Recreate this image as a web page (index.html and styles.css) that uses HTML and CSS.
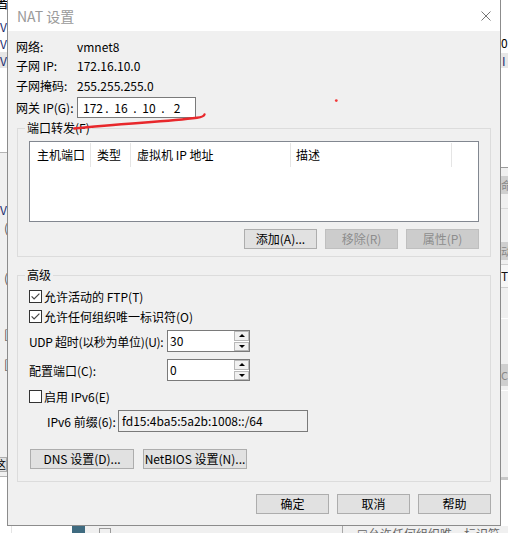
FILE: index.html
```html
<!DOCTYPE html>
<html lang="zh-CN">
<head>
<meta charset="utf-8">
<title>NAT 设置</title>
<link rel="stylesheet" href="styles.css">
</head>
<body>
<div class="desk">
  <div class="bg-left">
    <span class="bgch bl-top">者</span>
    <div class="bl-band"></div>
    <span class="bgch bl-v v1">V</span>
    <span class="bgch bl-v v2">V</span>
    <span class="bgch bl-v v3">V</span>
    <div class="bl-panel">
      <span class="bgch bl-v v4">V</span>
      <span class="bgch bl-p p1">(</span>
      <span class="bgch bl-p p2">(</span>
      <span class="bgch bl-p p3">[</span>
      <span class="bgch bl-p p4">[</span>
      <span class="bl-box">这</span>
    </div>
  </div>
  <div class="bg-right">
    <span class="bgch br-t1">0.</span>
    <div class="br-band"><span class="bgch">I</span></div>
    <div class="br-panel">
      <span class="br-btn b1">命</span>
      <div class="br-line l1"></div>
      <span class="br-btn b2">动</span>
      <span class="br-box">T</span>
      <div class="br-line l2"></div>
      <span class="br-btn b3">CF</span>
      <div class="br-line l3"></div>
    </div>
  </div>
  <div class="bg-bottom">
    <div class="bb-white"></div>
    <div class="bb-teal"></div>
    <div class="bb-gray"><span class="bb-mini"></span></div>
    <div class="bb-right"><span class="bb-text">☑允许任何组织唯一标识符(O)</span></div>
  </div>

  <div class="dialog">
    <div class="titlebar">
      <span class="title">NAT 设置</span>
      <svg class="close" width="10" height="10" viewBox="0 0 10 10"><path d="M0.5 0.5 L9.5 9.5 M9.5 0.5 L0.5 9.5" stroke="#777" stroke-width="1" fill="none"/></svg>
    </div>
    <div class="body">
      <div class="info">
        <span>网络:</span><span>vmnet8</span>
        <span>子网 IP:</span><span>172.16.10.0</span>
        <span>子网掩码:</span><span>255.255.255.0</span>
      </div>
      <div class="gw">
        <span class="gw-label">网关 IP(G):</span>
        <div class="ipbox">
          <span class="oct">172</span><span class="dot">.</span><span class="oct">16</span><span class="dot">.</span><span class="oct">10</span><span class="dot">.</span><span class="oct">2</span>
        </div>
      </div>

      <div class="group g1">
        <span class="group-label">端口转发(F)</span>
        <div class="listview">
          <div class="lv-head">
            <div class="col c1">主机端口</div>
            <div class="col c2">类型</div>
            <div class="col c3">虚拟机 IP 地址</div>
            <div class="col c4">描述</div>
            <div class="col c5"></div>
          </div>
        </div>
        <div class="btnrow">
          <span class="btn w73">添加(A)...</span>
          <span class="btn w73 disabled">移除(R)</span>
          <span class="btn w73 disabled">属性(P)</span>
        </div>
      </div>

      <div class="group g2">
        <span class="group-label">高级</span>
        <label class="chkrow">
          <svg class="chk" width="13" height="13" viewBox="0 0 13 13"><rect x="0.5" y="0.5" width="12" height="12" fill="#fff" stroke="#333"/><path d="M2.6 6.4 L5.1 8.9 L10.4 3.6" stroke="#444" stroke-width="1.2" fill="none"/></svg>
          <span>允许活动的 FTP(T)</span>
        </label>
        <label class="chkrow">
          <svg class="chk" width="13" height="13" viewBox="0 0 13 13"><rect x="0.5" y="0.5" width="12" height="12" fill="#fff" stroke="#333"/><path d="M2.6 6.4 L5.1 8.9 L10.4 3.6" stroke="#444" stroke-width="1.2" fill="none"/></svg>
          <span>允许任何组织唯一标识符(O)</span>
        </label>
        <div class="fieldrow r-udp">
          <span class="flabel tight">UDP 超时(以秒为单位)(U):</span>
          <div class="spin">
            <span class="spin-val">30</span>
            <div class="spin-btns"><span class="sb"><i class="up"></i></span><span class="sb"><i class="down"></i></span></div>
          </div>
        </div>
        <div class="fieldrow r-port">
          <span class="flabel">配置端口(C):</span>
          <div class="spin">
            <span class="spin-val">0</span>
            <div class="spin-btns"><span class="sb"><i class="up"></i></span><span class="sb"><i class="down"></i></span></div>
          </div>
        </div>
        <label class="chkrow r-ipv6">
          <svg class="chk" width="13" height="13" viewBox="0 0 13 13"><rect x="0.5" y="0.5" width="12" height="12" fill="#fff" stroke="#333"/></svg>
          <span>启用 IPv6(E)</span>
        </label>
        <div class="fieldrow r-prefix">
          <span class="plabel">IPv6 前缀(6):</span>
          <div class="prefix">fd15:4ba5:5a2b:1008::/64</div>
        </div>
        <div class="dnsrow">
          <span class="btn w104">DNS 设置(D)...</span>
          <span class="btn w104">NetBIOS 设置(N)...</span>
        </div>
      </div>

      <div class="footer">
        <span class="btn w73">确定</span>
        <span class="btn w73">取消</span>
        <span class="btn w73">帮助</span>
      </div>
    </div>
  </div>

  <svg class="marks" width="508" height="533" viewBox="0 0 508 533">
    <path d="M74 128.5 C 96 126.5 118 124.5 142 122.8 C 166 121 184 119.5 197 117.8 C 201.5 117.2 204 116.2 204.5 114.5" stroke="#e8282c" stroke-width="2.4" fill="none" stroke-linecap="round"/>
    <circle cx="336.3" cy="100.6" r="1.4" fill="#f23a3a"/>
  </svg>
</div>
</body>
</html>
```

FILE: styles.css
```css
* { box-sizing: border-box; }
html, body { margin: 0; padding: 0; }
body {
  font-family: "Noto Sans CJK SC", "Noto Sans", sans-serif;
  font-size: 12px;
  color: #000;
  background: #fff;
}
.desk {
  position: relative;
  width: 508px;
  height: 533px;
  overflow: hidden;
  background: #fff;
}

/* background window fragments */
.bgch { position: absolute; font-size: 12px; line-height: 14px; color: #1b2b70; }
.bg-left { position: absolute; left: 0; top: 0; width: 8px; height: 533px; }
.bl-top { left: -5px; top: -5px; color: #000; font-size: 14px; }
.bl-band { position: absolute; left: 0; top: 52px; width: 8px; height: 16px; background: #e6e6e6; }
.bl-v { left: 0; }
.v1 { top: 20px; }
.v2 { top: 37px; }
.v3 { top: 54px; }
.bl-panel { position: absolute; left: 0; top: 152px; width: 8px; height: 325px; background: #f0f0f0; border-top: 1px solid #b4b4b4; border-bottom: 1px solid #b4b4b4; }
.v4 { top: 50px; }
.bl-p { left: 4px; color: #555; }
.p1 { top: 68px; }
.p2 { top: 118px; }
.p3 { top: 174px; }
.p4 { top: 204px; }
.bl-box { position: absolute; left: -6px; top: 304px; width: 13px; height: 15px; border: 1px solid #adadad; background: #e1e1e1; font-size: 11px; line-height: 13px; }

.bg-right { position: absolute; left: 501px; top: 0; width: 7px; height: 533px; }
.br-t1 { left: 0; top: 36px; color: #000; }
.br-band { position: absolute; left: 0; top: 53px; width: 7px; height: 15px; background: #e8e8e8; }
.br-band .bgch { left: 1px; top: 1px; }
.br-panel { position: absolute; left: 0; top: 167px; width: 7px; height: 313px; background: #f0f0f0; border-top: 1px solid #9a9a9a; border-bottom: 3px solid #c8c8c8; }
.br-btn { position: absolute; left: 0; width: 10px; height: 18px; background: #cfcfcf; color: #888; font-size: 11px; line-height: 18px; overflow: hidden; }
.b1 { top: 8px; }
.b2 { top: 74px; }
.b3 { top: 196px; height: 22px; line-height: 22px; }
.br-box { position: absolute; left: -1px; top: 96px; width: 10px; height: 24px; background: #f7f7f7; border: 1px solid #cfcfcf; line-height: 22px; font-size: 12px; color: #111; }
.br-line { position: absolute; left: 0; width: 7px; height: 1px; background: #fff; }
.l1 { top: 40px; background: #d8d8d8; }
.l2 { top: 150px; }
.l3 { top: 222px; }

.bg-bottom { position: absolute; left: 0; top: 526px; width: 508px; height: 7px; display: flex; }
.bb-white { width: 61px; background: #fff; border-left: 1px solid #e4e4e4; margin-left: 11px; }
.bb-teal { width: 13px; background: #3f6b80; }
.bb-gray { position: relative; width: 258px; background: #f0f0f0; border-right: 1px solid #a8a8a8; }
.bb-mini { position: absolute; left: 14px; top: 2px; width: 12px; height: 6px; border: 1px solid #9a9a9a; border-bottom: none; }
.bb-right { position: relative; flex: 1; background: #f0f0f0; overflow: hidden; }
.bb-text { position: absolute; left: 14px; top: 1px; font-size: 12px; line-height: 14px; color: #666; }

/* dialog */
.dialog {
  position: absolute;
  left: 7px;
  top: -1px;
  width: 494px;
  height: 527px;
  border: 1px solid #8c8c8c;
  background: #f0f0f0;
  display: flex;
  flex-direction: column;
}
.titlebar {
  height: 31px;
  background: #fff;
  display: flex;
  align-items: center;
  justify-content: space-between;
  padding: 0 9px 0 9px;
}
.title { font-size: 14px; color: #9a9a9a; line-height: 20px; }
.close { display: block; }

.body {
  flex: 1;
  padding: 5.5px 9px 0 9px;
  display: flex;
  flex-direction: column;
}
.info {
  display: grid;
  grid-template-columns: 61px auto;
  grid-auto-rows: 19.5px;
  line-height: 19.5px;
  margin-left: -1px;
}
.gw {
  display: flex;
  align-items: center;
  margin-top: 2px;
  margin-left: -1px;
  height: 21px;
}
.gw-label { width: 61px; }
.ipbox {
  width: 119px;
  height: 21px;
  border: 1px solid #7a7a7a;
  background: #fff;
  display: flex;
  align-items: center;
  padding-left: 4px;
  line-height: 19px;
}
.oct { width: 22px; text-align: center; }
.dot { width: 6px; text-align: center; }

.group {
  position: relative;
  border: 1px solid #dcdcdc;
}
.group-label {
  position: absolute;
  left: 7px;
  top: -8px;
  padding: 0 2px;
  background: #f0f0f0;
  line-height: 14px;
}
.g1 {
  margin-top: 10px;
  height: 129px;
  padding: 12px 11px 0 11px;
}
.listview {
  height: 81px;
  border: 1px solid #828790;
  background: #fff;
}
.lv-head {
  display: flex;
  margin-top: 1px;
  height: 24px;
  line-height: 24px;
}
.col { border-right: 1px solid #e5e5e5; padding-left: 6px; white-space: nowrap; }
.c1 { width: 61px; padding-left: 7px; }
.c2 { width: 40px; }
.c3 { width: 160px; }
.c4 { width: 161px; padding-left: 5px; }
.c5 { flex: 1; border-right: none; }

.btnrow {
  display: flex;
  justify-content: flex-end;
  gap: 8px;
  margin-top: 7px;
}
.btn {
  display: flex;
  align-items: center;
  justify-content: center;
  height: 20px;
  border: 1px solid #adadad;
  background: #e1e1e1;
  line-height: 18px;
  white-space: nowrap;
}
.btn.disabled { background: #cccccc; border-color: #bfbfbf; color: #8d8d8d; }
.w73 { width: 73px; }
.w104 { width: 104px; }

.g2 {
  margin-top: 18px;
  height: 207px;
  padding: 10px 11px 0 11px;
}
.chkrow {
  display: flex;
  align-items: center;
  height: 20px;
}
.chk { display: block; flex: none; margin-right: 2px; }
.fieldrow { display: flex; align-items: center; }
.r-udp { margin-top: 4px; height: 22px; }
.r-port { margin-top: 7px; height: 22px; }
.r-ipv6 { margin-top: 5px; }
.r-prefix { margin-top: 4px; height: 22px; }
.flabel { width: 138px; flex: none; white-space: nowrap; }
.flabel.tight { letter-spacing: -0.3px; }
.spin {
  position: relative;
  width: 83px;
  height: 22px;
  border: 1px solid #7a7a7a;
  background: #fff;
  display: flex;
  align-items: center;
  justify-content: space-between;
  padding-left: 2px;
}
.spin-val { line-height: 18px; }
.spin-btns {
  display: flex;
  flex-direction: column;
  gap: 1px;
  width: 15px;
  height: 20px;
}
.sb {
  flex: 1;
  border: 1px solid #b8b8b8;
  background: #f0f0f0;
  display: flex;
  align-items: center;
  justify-content: center;
}
.up { width: 0; height: 0; border-left: 3px solid transparent; border-right: 3px solid transparent; border-bottom: 3px solid #000; }
.down { width: 0; height: 0; border-left: 3px solid transparent; border-right: 3px solid transparent; border-top: 3px solid #000; }
.plabel { width: 71px; margin-left: 18px; white-space: nowrap; }
.prefix {
  width: 190px;
  height: 22px;
  border: 1px solid #7a7a7a;
  background: #f0f0f0;
  padding-left: 3px;
  line-height: 20px;
}
.dnsrow {
  display: flex;
  gap: 9px;
  margin-top: 17px;
  margin-left: 1px;
}

.footer {
  display: flex;
  justify-content: flex-end;
  gap: 8px;
  margin-top: 12px;
}

.marks { position: absolute; left: 0; top: 0; pointer-events: none; }
```
